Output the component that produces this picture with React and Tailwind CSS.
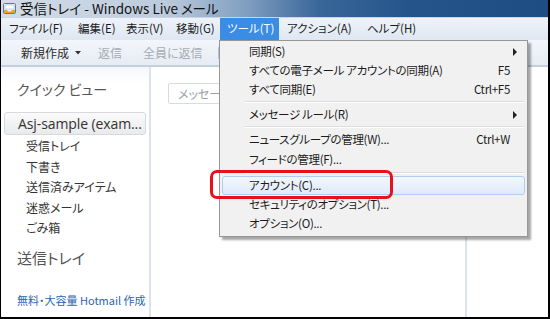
import React from "react";

const jp = "font-['Noto_Sans_CJK_JP','Noto_Sans',sans-serif] [font-feature-settings:'palt']";

const MenuItem = ({ label, shortcut, arrow, h = "h-[19px]" }) => (
  <div className={`flex items-center ${h} pl-[28px] pr-[16px] text-[11.5px] tracking-[-0.3px] text-[#1b1b1b]`}>
    <span className="flex-1">{label}</span>
    {shortcut && <span>{shortcut}</span>}
    {arrow && (
      <svg width="5" height="8" viewBox="0 0 5 8" className="mr-[-8px]">
        <path d="M0 0 L4 4 L0 8 Z" fill="#222" />
      </svg>
    )}
  </div>
);

const Separator = () => (
  <div className="h-[6px] flex items-center pl-[24px] pr-[2px]">
    <div className="w-full border-t border-[#dcdcdc] border-b border-b-white" />
  </div>
);

const TitleIcon = () => (
  <svg width="14" height="13" viewBox="0 0 14 13">
    <rect x="0.5" y="1.5" width="12" height="10" rx="1" fill="#e9f1fb" stroke="#4a7cc0" />
    <rect x="2" y="3" width="9" height="4" fill="#ffffff" stroke="#9fb8d8" strokeWidth="0.6" />
    <path d="M1 8 L4 8 L5 9.5 L8 9.5 L9 8 L12 8 L12 11 L1 11 Z" fill="#f0a030" />
  </svg>
);

const App = () => {
  return (
    <div className={`relative w-[550px] h-[319px] overflow-hidden flex flex-col bg-white border-l border-r-2 border-b-2 border-black ${jp}`}>
      {/* title bar */}
      <div className="h-[17px] flex items-center gap-[3px] pl-[2px] bg-[linear-gradient(to_right,#d3dde9_0%,#bccbdc_30%,#7f9ec0_45%,#3a679a_58%,#24548a_75%,#1e4d84_100%)]">
        <TitleIcon />
        <span className="text-[13.5px] leading-[17px] text-[#111]">受信トレイ - Windows Live メール</span>
      </div>

      {/* menu bar */}
      <div className="h-[23px] flex items-stretch text-[11.5px] text-[#1b1b1b] bg-[linear-gradient(to_bottom,#eef3fa,#dfe7f2)] border-t border-[#c9d5e4]">
        <div className="flex items-center pl-[8px] w-[77px]">ファイル(F)</div>
        <div className="flex items-center w-[48px]">編集(E)</div>
        <div className="flex items-center w-[50px]">表示(V)</div>
        <div className="flex items-center w-[44px]">移動(G)</div>
        <div className="flex items-center pl-[7px] w-[59px] bg-[#3a8ce4] text-white">ツール(T)</div>
        <div className="flex items-center pl-[8px] w-[88px]">アクション(A)</div>
        <div className="flex items-center">ヘルプ(H)</div>
      </div>

      {/* toolbar */}
      <div className="h-[27px] flex items-center text-[12px] bg-[linear-gradient(to_bottom,#f3f6fb,#e6ecf4)] border-b-2 border-[#c4cfdd]">
        <div className="flex items-center pl-[20px] text-[#2b2b2b] w-[97px]">
          <span>新規作成</span>
          <svg width="6" height="4" viewBox="0 0 6 4" className="ml-[6px] mt-[1px]">
            <path d="M0 0 L6 0 L3 3.5 Z" fill="#333" />
          </svg>
        </div>
        <div className="text-[#a6acb4] w-[45px]">返信</div>
        <div className="text-[#a6acb4] w-[75px]">全員に返信</div>
        <div className="w-px h-[12px] bg-[#b9c3cf]" />
      </div>

      {/* body */}
      <div className="flex-1 flex min-h-0">
        {/* left pane */}
        <div className="w-[150px] border-r-2 border-[#dbe2ec] flex flex-col bg-[linear-gradient(to_bottom,#f4f7fb_0px,#ffffff_16px)]">
          <div className="pl-[16px] pt-[13px] text-[14px] leading-[18px] text-[#555]">クイック ビュー</div>
          <div className="mx-[3px] mt-[14px] h-[23px] flex items-center pl-[13px] rounded-[3px] border border-[#d6d9de] bg-[linear-gradient(to_bottom,#fbfbfb,#e9eaec)] text-[14px] text-[#333] font-['Open_Sans','Noto_Sans_CJK_JP',sans-serif] tracking-[-0.1px]">
            Asj-sample (exam...
          </div>
          <div className="flex flex-col pl-[25px] pt-[1px] text-[12px] text-[#333]">
            <div className="h-[20.5px] flex items-center">受信トレイ</div>
            <div className="h-[20.5px] flex items-center">下書き</div>
            <div className="h-[20.5px] flex items-center">送信済みアイテム</div>
            <div className="h-[20.5px] flex items-center">迷惑メール</div>
            <div className="h-[20.5px] flex items-center">ごみ箱</div>
          </div>
          <div className="pl-[16px] mt-[10px] text-[15px] leading-[18px] text-[#555]">送信トレイ</div>
          <div className="pl-[16px] mt-[25px] text-[11px] leading-[16px] text-[#2e63ad] whitespace-nowrap">無料・大容量 Hotmail 作成</div>
        </div>

        {/* middle pane */}
        <div className="w-[316px] border-r-2 border-[#dde4ef] bg-white">
          <div className="ml-[17px] mt-[16px] h-[21px] w-[52px] overflow-hidden rounded-[2px] border border-[#d6dbe3] flex items-center pl-[9px] text-[12px] text-[#9aa0a8] whitespace-nowrap">
            メッセージ
          </div>
        </div>

        {/* right pane */}
        <div className="flex-1 bg-white" />
      </div>

      {/* tools dropdown */}
      <div className="absolute left-[218px] top-[40px] w-[309px] h-[197px] bg-[#f1f1f1] border border-[#979797] shadow-[3px_3px_2px_rgba(0,0,0,0.35)] pt-[1px] px-[1px]">
        <MenuItem label="同期(S)" arrow />
        <MenuItem label="すべての電子メール アカウントの同期(A)" shortcut="F5" />
        <MenuItem label="すべて同期(E)" shortcut="Ctrl+F5" />
        <Separator />
        <MenuItem label="メッセージ ルール(R)" arrow />
        <Separator />
        <MenuItem label="ニュースグループの管理(W)..." shortcut="Ctrl+W" h="h-[20px]" />
        <MenuItem label="フィードの管理(F)..." h="h-[20px]" />
        <Separator />
        <div className="h-[19px] mx-[1px] rounded-[3px] border border-[#aecdf0] bg-[linear-gradient(to_bottom,#f2f7fd,#dfeafa)] flex items-center pl-[26px] text-[11.5px] tracking-[-0.3px] text-[#1b1b1b]">
          アカウント(C)...
        </div>
        <MenuItem label="セキュリティのオプション(T)..." />
        <MenuItem label="オプション(O)..." />
      </div>

      {/* red highlight */}
      <div className="absolute left-[209px] top-[170px] w-[183px] h-[29px] rounded-[7px] border-[3px] border-[#e8101a]" />
    </div>
  );
};

export default App;
